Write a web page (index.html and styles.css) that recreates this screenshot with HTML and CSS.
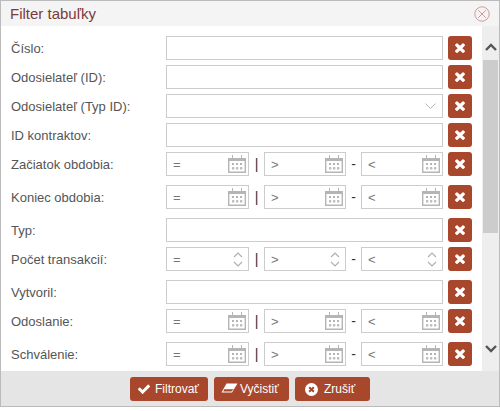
FILE: index.html
```html
<!DOCTYPE html>
<html lang="sk">
<head>
    <meta charset="UTF-8">
    <meta name="viewport" content="width=device-width, initial-scale=1.0">
    <title>Filter tabuľky</title>
    <link rel="stylesheet" href="styles.css">
</head>
<body>
    <!-- Ikony -->
    <svg class="defs" width="0" height="0">
        <symbol id="i-times" viewBox="0 0 1408 1792">
            <path fill="currentColor" d="M1298 1214q0 40-28 68l-136 136q-28 28-68 28t-68-28l-294-294-294 294q-28 28-68 28t-68-28l-136-136q-28-28-28-68t28-68l294-294-294-294q-28-28-28-68t28-68l136-136q28-28 68-28t68 28l294 294 294-294q28-28 68-28t68 28l136 136q28 28 28 68t-28 68l-294 294 294 294q28 28 28 68z"/>
        </symbol>
        <symbol id="i-cal" viewBox="0 0 18 18">
            <path fill="none" stroke="#b5b5b5" stroke-width="1.4" d="M.7 3.7h16.6v13.6H.7z"/>
            <path fill="#b5b5b5" d="M0 3h18v3H0zM4 0h1v3H4zM13 0h1v3h-1z"/>
            <path fill="#b5b5b5" d="M4 8h2v2H4zM8 8h2v2H8zM12 8h2v2h-2z"/>
            <path fill="none" stroke="#b5b5b5" d="M4.5 12.5h1.4v1.6H4.500zM8.500 12.500h1.400v1.600H8.500zM12.500 12.500h1.400v1.600h-1.400z"/>
        </symbol>
        <symbol id="i-spin" viewBox="0 0 10 17">
            <path fill="none" stroke="#b0b0b0" stroke-width="1.2" d="M1 6l4-4 4 4M1 11l4 4 4-4"/>
        </symbol>
    </svg>

    <div class="window">
        <div class="title-bar">
            <span class="title">Filter tabuľky</span>
            <svg class="close" width="16" height="16" viewBox="0 0 16 16">
                <circle cx="8" cy="8" r="7.2" fill="none" stroke="#d49a9a"/>
                <path fill="none" stroke="#d49a9a" d="M4.2 4.2l7.6 7.6M11.8 4.2l-7.6 7.6"/>
            </svg>
        </div>

        <div class="body">
            <form class="filter">
                <div class="row">
                    <label>Číslo:</label>
                    <input class="input" type="text">
                    <button type="button" class="clear"><svg width="12" height="15"><use href="#i-times"/></svg></button>
                </div>
                <div class="row">
                    <label>Odosielateľ (ID):</label>
                    <input class="input" type="text">
                    <button type="button" class="clear"><svg width="12" height="15"><use href="#i-times"/></svg></button>
                </div>
                <div class="row">
                    <label>Odosielateľ (Typ ID):</label>
                    <div class="input select">
                        <svg width="11" height="6" viewBox="0 0 11 6"><path fill="none" stroke="#b5b5b5" d="M.5.5l5 5 5-5"/></svg>
                    </div>
                    <button type="button" class="clear"><svg width="12" height="15"><use href="#i-times"/></svg></button>
                </div>
                <div class="row">
                    <label>ID kontraktov:</label>
                    <input class="input" type="text">
                    <button type="button" class="clear"><svg width="12" height="15"><use href="#i-times"/></svg></button>
                </div>

                <div class="row triple">
                    <label>Začiatok obdobia:</label>
                    <div class="range">
                        <div class="field first"><span>=</span><svg width="18" height="18"><use href="#i-cal"/></svg></div>
                        <span class="sep">|</span>
                        <div class="field"><span>&gt;</span><svg width="18" height="18"><use href="#i-cal"/></svg></div>
                        <span class="sep">-</span>
                        <div class="field"><span>&lt;</span><svg width="18" height="18"><use href="#i-cal"/></svg></div>
                    </div>
                    <button type="button" class="clear"><svg width="12" height="15"><use href="#i-times"/></svg></button>
                </div>
                <div class="row triple">
                    <label>Koniec obdobia:</label>
                    <div class="range">
                        <div class="field first"><span>=</span><svg width="18" height="18"><use href="#i-cal"/></svg></div>
                        <span class="sep">|</span>
                        <div class="field"><span>&gt;</span><svg width="18" height="18"><use href="#i-cal"/></svg></div>
                        <span class="sep">-</span>
                        <div class="field"><span>&lt;</span><svg width="18" height="18"><use href="#i-cal"/></svg></div>
                    </div>
                    <button type="button" class="clear"><svg width="12" height="15"><use href="#i-times"/></svg></button>
                </div>
                <div class="row">
                    <label>Typ:</label>
                    <input class="input" type="text">
                    <button type="button" class="clear"><svg width="12" height="15"><use href="#i-times"/></svg></button>
                </div>
                <div class="row triple">
                    <label>Počet transakcií:</label>
                    <div class="range">
                        <div class="field first spin"><span>=</span><svg width="10" height="17"><use href="#i-spin"/></svg></div>
                        <span class="sep">|</span>
                        <div class="field spin"><span>&gt;</span><svg width="10" height="17"><use href="#i-spin"/></svg></div>
                        <span class="sep">-</span>
                        <div class="field spin"><span>&lt;</span><svg width="10" height="17"><use href="#i-spin"/></svg></div>
                    </div>
                    <button type="button" class="clear"><svg width="12" height="15"><use href="#i-times"/></svg></button>
                </div>
                <div class="row">
                    <label>Vytvoril:</label>
                    <input class="input" type="text">
                    <button type="button" class="clear"><svg width="12" height="15"><use href="#i-times"/></svg></button>
                </div>
                <div class="row triple">
                    <label>Odoslanie:</label>
                    <div class="range">
                        <div class="field first"><span>=</span><svg width="18" height="18"><use href="#i-cal"/></svg></div>
                        <span class="sep">|</span>
                        <div class="field"><span>&gt;</span><svg width="18" height="18"><use href="#i-cal"/></svg></div>
                        <span class="sep">-</span>
                        <div class="field"><span>&lt;</span><svg width="18" height="18"><use href="#i-cal"/></svg></div>
                    </div>
                    <button type="button" class="clear"><svg width="12" height="15"><use href="#i-times"/></svg></button>
                </div>
                <div class="row triple">
                    <label>Schválenie:</label>
                    <div class="range">
                        <div class="field first"><span>=</span><svg width="18" height="18"><use href="#i-cal"/></svg></div>
                        <span class="sep">|</span>
                        <div class="field"><span>&gt;</span><svg width="18" height="18"><use href="#i-cal"/></svg></div>
                        <span class="sep">-</span>
                        <div class="field"><span>&lt;</span><svg width="18" height="18"><use href="#i-cal"/></svg></div>
                    </div>
                    <button type="button" class="clear"><svg width="12" height="15"><use href="#i-times"/></svg></button>
                </div>
            </form>

            <!-- Posuvnik -->
            <div class="scrollbar">
                <svg class="arrow-up" width="12" height="8" viewBox="0 0 12 8"><path fill="none" stroke="#555" stroke-width="2.4" d="M1 7l5-5 5 5"/></svg>
                <div class="thumb"></div>
                <svg class="arrow-down" width="12" height="8" viewBox="0 0 12 8"><path fill="none" stroke="#555" stroke-width="2.4" d="M1 1l5 5 5-5"/></svg>
            </div>
        </div>

        <div class="footer">
            <button type="button" class="button btn-filter">
                <svg width="14" height="14" viewBox="0 0 1792 1792"><path fill="currentColor" d="M1671 566q0 40-28 68l-724 724-136 136q-28 28-68 28t-68-28l-136-136-362-362q-28-28-28-68t28-68l136-136q28-28 68-28t68 28l294 295 656-657q28-28 68-28t68 28l136 136q28 28 28 68z"/></svg>
                Filtrovať
            </button>
            <button type="button" class="button btn-clear">
                <svg width="17" height="12" viewBox="0 0 17 12"><path fill="currentColor" d="M5.500.5h11L11 9.500H.5z"/><path fill="#a8472b" d="M3.200 6.200h9.400l-2.200 2.400H2.200z"/></svg>
                Vyčistiť
            </button>
            <button type="button" class="button btn-cancel">
                <svg width="13" height="13" viewBox="0 0 13 13"><circle cx="6.500" cy="6.500" r="6.500" fill="currentColor"/><path fill="none" stroke="#a8472b" stroke-width="2" d="M4.200 4.200l4.600 4.600M8.800 4.200l-4.600 4.600"/></svg>
                Zrušiť
            </button>
        </div>
    </div>
</body>
</html>
```

FILE: styles.css
```css
body {
    margin: 0;
    background: #fff;
    font-family: "Liberation Sans", Arial, sans-serif;
    font-size: 13px;
    color: #555;
    overflow: hidden;
}
.defs {
    display: block;
}
.window {
    width: 500px;
    height: 407px;
    box-sizing: border-box;
    border: 1px solid #bbb;
    display: flex;
    flex-direction: column;
}
.title-bar {
    height: 25px;
    flex: none;
    background: #f4f4f4;
    display: flex;
    align-items: center;
    justify-content: space-between;
    padding: 0 9px;
}
.title {
    font-size: 15px;
    color: #7b3a3a;
}
.body {
    flex: 1;
    display: flex;
    min-height: 0;
    overflow: hidden;
}
.filter {
    flex: 1;
    padding: 10px 10px 0;
}
.row {
    display: flex;
    align-items: center;
    height: 24px;
    margin-bottom: 5px;
}
.row.triple {
    margin-bottom: 9px;
}
.row label {
    width: 155px;
    flex: none;
}
.input {
    flex: 1;
    min-width: 0;
    height: 24px;
    box-sizing: border-box;
    margin: 0;
    padding: 0 6px;
    border: 1px solid #ccc;
    background: #fff;
}
.select {
    display: flex;
    align-items: center;
    justify-content: flex-end;
    padding-right: 6px;
}
.range {
    flex: 1;
    display: flex;
    align-items: center;
}
.field {
    width: 82px;
    height: 24px;
    box-sizing: border-box;
    border: 1px solid #ccc;
    display: flex;
    align-items: center;
    justify-content: space-between;
    padding: 0 2px 0 6px;
    color: #777;
}
.field.first {
    width: 83px;
}
.field.spin {
    padding-right: 5px;
}
.sep {
    width: 15px;
    text-align: center;
    color: #333;
    font-size: 14px;
}
.clear {
    width: 24px;
    height: 24px;
    flex: none;
    margin-left: 5px;
    padding: 0;
    border: none;
    border-radius: 3px;
    background: #a8472b;
    color: #fff;
    display: flex;
    align-items: center;
    justify-content: center;
}
.scrollbar {
    width: 17px;
    flex: none;
    background: #eee;
    display: flex;
    flex-direction: column;
    align-items: center;
}
.arrow-up {
    margin-top: 17px;
}
.thumb {
    width: 15px;
    height: 173px;
    margin-top: 9px;
    background: #ccc;
}
.arrow-down {
    margin-top: 112px;
}
.footer {
    height: 35px;
    flex: none;
    box-sizing: border-box;
    background: #e5e5e5;
    display: flex;
    justify-content: center;
    gap: 6px;
    padding-top: 6px;
}
.button {
    height: 24px;
    box-sizing: border-box;
    padding: 0;
    border: none;
    border-radius: 3px;
    background: #a8472b;
    color: #fff;
    font-family: inherit;
    font-size: 12px;
    display: flex;
    align-items: center;
    justify-content: flex-start;
}
.btn-filter {
    width: 78px;
    padding-left: 7px;
    gap: 4px;
}
.btn-clear {
    width: 75px;
    padding-left: 7px;
    gap: 2px;
}
.btn-cancel {
    width: 75px;
    padding-left: 10px;
    gap: 6px;
}
```
